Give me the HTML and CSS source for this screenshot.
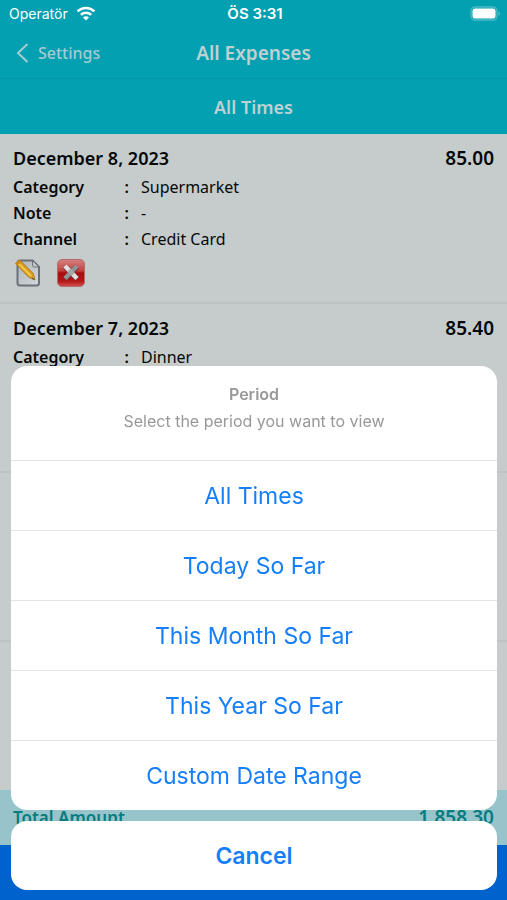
FILE: index.html
```html
<!DOCTYPE html>
<html lang="en">
<head>
<meta charset="utf-8">
<meta name="viewport" content="width=device-width, initial-scale=1">
<title>All Expenses</title>
<link rel="stylesheet" href="styles.css">
</head>
<body>
<div class="app">
  <header class="top">
    <div class="status">
      <div class="carrier">
        <span>Operatör</span>
        <svg width="20" height="15" viewBox="0 0 20 15" fill="none" stroke="#fff" stroke-width="2.6" aria-hidden="true">
          <path d="M1.6 5.4C6.2.8 13.8.8 18.4 5.4"/>
          <path d="M4.900 8.900C7.700 6.100 12.300 6.100 15.100 8.900"/>
          <path d="M10 14.400 7 11.400C8.700 9.900 11.300 9.900 13 11.400Z" fill="#fff" stroke="none"/>
        </svg>
      </div>
      <span class="clock">ÖS 3:31</span>
      <svg class="battery" width="31" height="15" viewBox="0 0 31 15" aria-hidden="true">
        <rect x="1" y="1" width="26" height="13" rx="4" fill="none" stroke="#50b9c5" stroke-width="1.4"/>
        <rect x="2.500" y="2.500" width="23" height="10" rx="2.500" fill="#fff"/>
        <path d="M28.500 5.200c2 .8 2 3.800 0 4.600z" fill="#50b9c5"/>
      </svg>
    </div>
    <nav class="nav">
      <a class="back" href="#settings">
        <svg width="13" height="20" viewBox="0 0 13 20" fill="none" stroke="currentColor" stroke-width="2" aria-hidden="true"><path d="M11.500 1 2 10l9.500 9"/></svg>
        <span>Settings</span>
      </a>
      <h1 class="title">All Expenses</h1>
    </nav>
    <button class="period" type="button">All Times</button>
  </header>

  <main class="list">
    <article class="expense">
      <div class="head"><h2>December 8, 2023</h2><strong>85.00</strong></div>
      <dl class="details">
        <dt>Category</dt><dd>Supermarket</dd>
        <dt>Note</dt><dd>-</dd>
        <dt>Channel</dt><dd>Credit Card</dd>
      </dl>
      <div class="actions">
        <button type="button" aria-label="Edit">
          <svg width="30" height="28" viewBox="0 0 30 28" aria-hidden="true">
            <defs><linearGradient id="page" x2="1" y2="1"><stop offset="0" stop-color="#aeb4b9"/><stop offset="1" stop-color="#d4d8dc"/></linearGradient></defs>
            <path d="M7 1.500h12.500L26 8v16q0 2.500-2.500 2.500H7Q4.500 26.500 4.500 24V4Q4.500 1.500 7 1.500z" fill="url(#page)" stroke="#697078" stroke-width="2"/>
            <path d="M19.500 1.500V6q0 2 2 2H26z" fill="#c3c8cb" stroke="#697078" stroke-width="1"/>
            <path d="M2.500 4.500 6.500.8 20.300 14.600 22 21 15.700 18.300z" fill="#d99b20" stroke="#a87518" stroke-width=".8"/>
            <path d="M4.500 3.500 18.200 17" stroke="#f3c94c" stroke-width="2"/>
            <path d="m2.500 4.500 4-3.700 2 2-4 3.700z" fill="#c8891f"/>
            <path d="m19.800 18.800 2.200 2.200-3.200-1.200z" fill="#4c4333"/>
          </svg>
        </button>
        <button type="button" aria-label="Delete">
          <svg width="30" height="28" viewBox="0 0 30 28" aria-hidden="true">
            <defs><linearGradient id="red" x2="0" y2="1"><stop offset="0" stop-color="#d58381"/><stop offset=".42" stop-color="#c04341"/><stop offset=".5" stop-color="#a60c0d"/><stop offset=".8" stop-color="#b51616"/><stop offset="1" stop-color="#d35350"/></linearGradient></defs>
            <rect x="1.500" y=".5" width="27" height="27" rx="4.500" fill="url(#red)" stroke="#b56b69"/>
            <path d="m9 7.500 12 12.500M21 7.500 9 20" stroke="#812c2c" stroke-width="5.500"/>
            <path d="M21 7 9 19.500" stroke="#929496" stroke-width="4.500"/>
            <path d="m9 7 4.300 4.500M16.700 15l4.300 4.500" stroke="#e0e0e0" stroke-width="4.500"/>
            <path d="m13 11 4 4.200" stroke="#a5a7a8" stroke-width="4.500"/>
          </svg>
        </button>
      </div>
    </article>
    <article class="expense">
      <div class="head"><h2>December 7, 2023</h2><strong>85.40</strong></div>
      <dl class="details">
        <dt>Category</dt><dd>Dinner</dd>
      </dl>
    </article>
    <article class="expense"></article>
  </main>

  <footer class="bottom">
    <div class="total"><span>Total Amount</span><strong>1,858.30</strong></div>
    <div class="bar"></div>
  </footer>
</div>

<div class="sheet" role="dialog" aria-labelledby="sheet-title">
  <div class="panel">
    <div class="intro">
      <h2 id="sheet-title">Period</h2>
      <p>Select the period you want to view</p>
    </div>
    <button type="button">All Times</button>
    <button type="button">Today So Far</button>
    <button type="button">This Month So Far</button>
    <button type="button">This Year So Far</button>
    <button type="button">Custom Date Range</button>
  </div>
  <button class="cancel" type="button">Cancel</button>
</div>
</body>
</html>
```
FILE: styles.css
```css
* { box-sizing: border-box; }

body, h1, h2, p, dl, dd { margin: 0; }

body {
  font-family: "Trebuchet MS", "Noto Sans", sans-serif;
  font-size: 16px;
  color: #050808;
}

button {
  padding: 0;
  border: 0;
  background: none;
  font: inherit;
  color: inherit;
}

.app {
  display: flex;
  flex-direction: column;
  min-height: 100vh;
  background: #c6cccc;
}

.top { background: #02a0b1; color: #bfd0d3; }

.status {
  display: grid;
  grid-template-columns: 1fr auto 1fr;
  align-items: center;
  height: 27px;
  padding: 0 6px 0 9px;
  font-family: Inter, sans-serif;
  font-size: 14px;
  color: #fff;
}

.carrier { display: flex; align-items: center; gap: 8px; }
.clock { font-size: 15px; font-weight: 600; }
.battery { justify-self: end; }

.nav {
  display: grid;
  grid-template-columns: 1fr auto 1fr;
  align-items: center;
  height: 52px;
  padding: 0 16px;
  border-bottom: 1px solid #0297a8;
}

.back {
  display: flex;
  align-items: center;
  gap: 9px;
  color: #a5cbd1;
  font-size: 16px;
  font-weight: 500;
  text-decoration: none;
}

.title { font-size: 19px; font-weight: 600; }

.period {
  display: block;
  width: 100%;
  height: 55px;
  font-size: 18px;
  font-weight: 600;
}

.list { flex: 1; }

.expense {
  min-height: 169px;
  padding: 11px 13px 15px;
  border-bottom: 2px solid #bdc3c4;
}

.head {
  display: flex;
  justify-content: space-between;
  margin-bottom: 3px;
  line-height: 26px;
}

.head h2 { font-size: 18px; font-weight: 600; }
.head strong { font-size: 19px; font-weight: 600; }

.details {
  display: grid;
  grid-template-columns: 128px 1fr;
  line-height: 26px;
}

.details dt {
  display: flex;
  justify-content: space-between;
  padding-right: 12px;
  font-weight: 600;
}

.details dt::after { content: ":"; }

.actions { display: flex; gap: 13px; margin-top: 7px; }
.actions svg { display: block; }

.total {
  display: flex;
  justify-content: space-between;
  height: 55px;
  padding: 0 13px;
  background: #97c4ca;
  color: #067c80;
  font-size: 17px;
  font-weight: 600;
  line-height: 55px;
}

.total strong { font-size: 19px; font-weight: 600; }

.bar { height: 55px; background: #0062cc; }

.sheet {
  position: fixed;
  right: 10px;
  bottom: 10px;
  left: 11px;
  display: flex;
  flex-direction: column;
  gap: 11px;
  font-family: Inter, sans-serif;
  font-size: 23px;
  color: #147efb;
}

.panel, .cancel { border-radius: 16px; background: #fff; }
.panel { overflow: hidden; }

.intro {
  height: 94px;
  padding-top: 15px;
  text-align: center;
  font-size: 16px;
  line-height: 27px;
  color: #98989a;
}

.intro h2 { font-size: 16px; font-weight: 600; }

.panel button {
  display: block;
  width: 100%;
  height: 70px;
  border-top: 1px solid #e3e4e5;
}

.cancel { height: 69px; font-weight: 600; }
```
